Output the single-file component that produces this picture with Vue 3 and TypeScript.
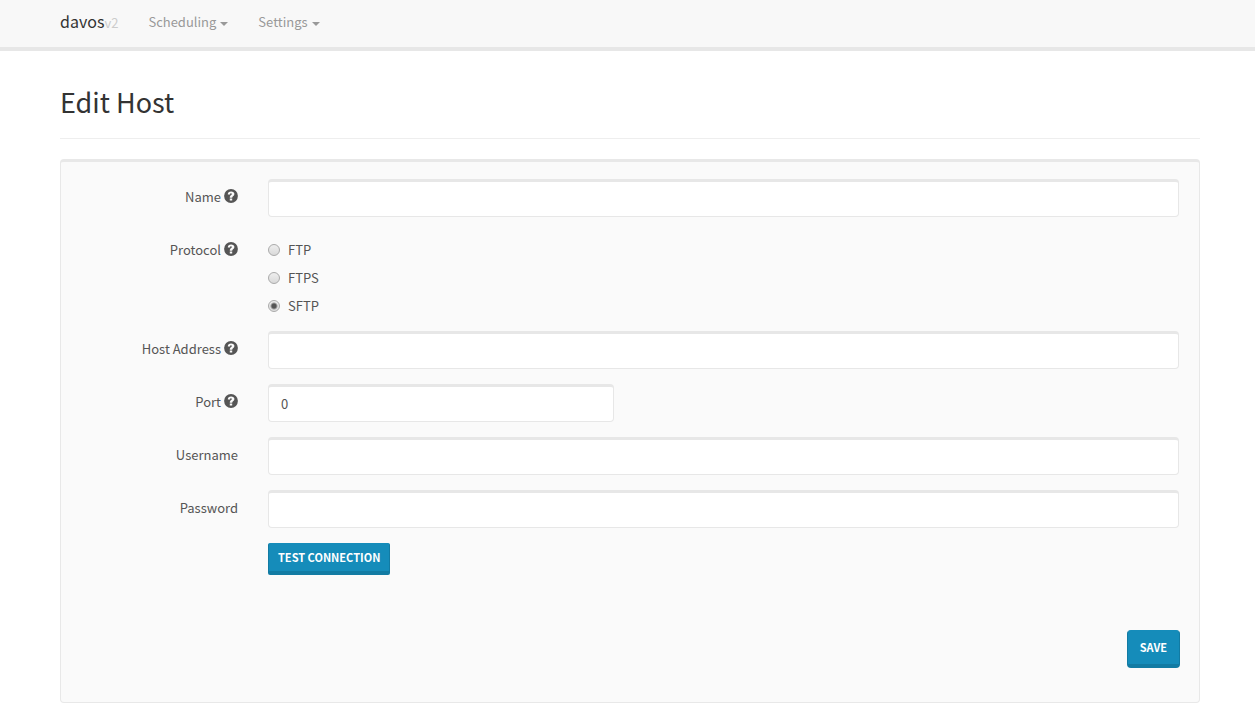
<script setup lang="ts">
import { ref } from 'vue'

interface Field {
  id: string
  label: string
  help: boolean
  type: 'text' | 'password' | 'protocol'
  short?: boolean
}

const menus: string[] = ['Scheduling', 'Settings']
const protocols: string[] = ['FTP', 'FTPS', 'SFTP']
const fields: Field[] = [
  { id: 'name', label: 'Name', help: true, type: 'text' },
  { id: 'protocol', label: 'Protocol', help: true, type: 'protocol' },
  { id: 'address', label: 'Host Address', help: true, type: 'text' },
  { id: 'port', label: 'Port', help: true, type: 'text', short: true },
  { id: 'username', label: 'Username', help: false, type: 'text' },
  { id: 'password', label: 'Password', help: false, type: 'password' },
]
const protocol = ref('SFTP')
const values = ref<Record<string, string>>({ name: '', address: '', port: '0', username: '', password: '' })
</script>

<template>
  <div class="page">
    <header class="navbar">
      <nav class="container nav-inner">
        <a class="brand" href="#">davos<span class="version">v2</span></a>
        <a v-for="menu in menus" :key="menu" class="menu" href="#">{{ menu }}<span class="caret"></span></a>
      </nav>
    </header>
    <main class="container">
      <h1 class="title">Edit Host</h1>
      <form class="well" @submit.prevent>
        <div v-for="field in fields" :key="field.id" class="row">
          <component
            :is="field.type === 'protocol' ? 'span' : 'label'"
            :id="field.id + '-label'"
            class="label"
            :for="field.type === 'protocol' ? undefined : field.id"
          >
            <span>{{ field.label }}</span>
            <svg v-if="field.help" class="help" viewBox="0 0 14 14" aria-hidden="true">
              <circle cx="7" cy="7" r="6.9" fill="#555" />
              <path d="M3.8 5.6C3.8 3.4 5 2.4 7.1 2.4c2 0 3.3 1 3.3 2.7 0 2.1-2.2 2.1-2.2 3.6H5.8c0-2.5 2-2.4 2-3.6 0-.5-.3-.8-.8-.8-.6 0-.9.5-.9 1.3zM5.8 9.4h2.4v2.2H5.8z" fill="#fafafa" />
            </svg>
          </component>
          <div v-if="field.type === 'protocol'" class="radios" role="radiogroup" :aria-labelledby="field.id + '-label'">
            <label v-for="p in protocols" :key="p" class="radio">
              <input v-model="protocol" type="radio" name="protocol" :value="p" />
              {{ p }}
            </label>
          </div>
          <input
            v-else
            :id="field.id"
            v-model="values[field.id]"
            class="control"
            :class="{ short: field.short }"
            :type="field.type"
          />
        </div>
        <div class="row">
          <button class="btn test offset" type="button">Test Connection</button>
        </div>
        <div class="actions">
          <button class="btn save" type="submit">Save</button>
        </div>
      </form>
    </main>
  </div>
</template>

<style>
body {
  margin: 0;
  background: #fff;
}
</style>

<style scoped>
.page,
.page * {
  box-sizing: border-box;
}
.page {
  font-family: "Source Sans Pro", "Noto Sans CJK SC", sans-serif;
  font-size: 13px;
  line-height: 20px;
  color: #555;
}
.container {
  padding: 0 55px 0 60px;
}
.navbar {
  background: #f8f8f8;
  border-bottom: 4px solid #e7e7e7;
}
.nav-inner {
  display: flex;
  align-items: center;
  gap: 30px;
  height: 47px;
  padding-bottom: 4px;
}
.brand {
  color: #333;
  font-size: 16px;
  text-decoration: none;
}
.version {
  color: #ccc;
  font-size: 13px;
}
.menu {
  display: flex;
  align-items: center;
  gap: 4px;
  color: #999;
  text-decoration: none;
}
.caret {
  border-top: 4px solid #999;
  border-left: 4px solid transparent;
  border-right: 4px solid transparent;
  margin-top: 4px;
}
.title {
  margin: 31px 0 20px;
  padding-bottom: 16px;
  border-bottom: 1px solid #eee;
  color: #333;
  font-size: 27px;
  font-weight: 400;
  line-height: 40px;
}
.well {
  padding: 17px 19px 34px;
  background: #fafafa;
  border: 1px solid #e8e8e8;
  border-top-width: 3px;
  border-radius: 4px;
}
.row {
  display: grid;
  grid-template-columns: 158px minmax(0, 1fr);
  column-gap: 30px;
  align-items: start;
  margin-bottom: 15px;
  padding-right: 1px;
}
.label {
  display: flex;
  justify-content: flex-end;
  gap: 3px;
  padding-top: 8px;
}
.help {
  width: 14px;
  height: 14px;
  margin-top: 2px;
}
.control {
  width: 100%;
  height: 38px;
  padding: 4px 12px 6px;
  background: #fff;
  border: 1px solid #e7e7e7;
  border-top-width: 3px;
  border-radius: 4px;
  color: #555;
  font: inherit;
  outline: none;
}
.short {
  width: 38%;
}
.radios {
  display: flex;
  flex-direction: column;
  gap: 8px;
  padding-top: 8px;
}
.radio {
  display: flex;
  align-items: center;
  gap: 8px;
}
.radio input {
  appearance: none;
  width: 12px;
  height: 12px;
  margin: 0;
  border: 1px solid #aaa;
  border-radius: 50%;
  background: linear-gradient(#eee, #d9d9d9);
}
.radio input:checked {
  background: radial-gradient(circle, #555 0 2px, transparent 4px), linear-gradient(#eee, #ddd);
}
.btn {
  background: #158cba;
  border: 1px solid #127ba3;
  border-top-color: #158cba;
  border-bottom-width: 4px;
  color: #fff;
  font: inherit;
  font-size: 11px;
  font-weight: 700;
  text-transform: uppercase;
}
.test {
  height: 32px;
  padding: 0 9px 1px;
  border-radius: 2px;
}
.offset {
  grid-column: 2;
  justify-self: start;
}
.save {
  height: 38px;
  padding: 0 12px 1px;
  border-radius: 4px;
}
.actions {
  display: flex;
  justify-content: flex-end;
  margin-top: 55px;
}
</style>
